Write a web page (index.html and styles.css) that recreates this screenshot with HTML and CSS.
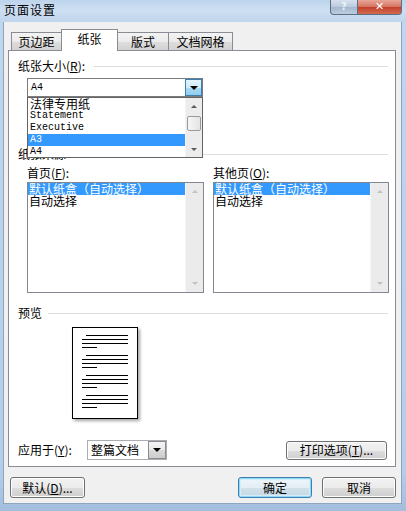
FILE: index.html
```html
<!DOCTYPE html>
<html lang="zh-CN">
<head>
<meta charset="utf-8">
<title>页面设置</title>
<link rel="stylesheet" href="styles.css">
</head>
<body>
<div class="window">
  <div class="titlebar">
    <span class="title">页面设置</span>
    <div class="caption">
      <span class="cap-btn cap-help">?</span>
      <span class="cap-btn cap-close">✕</span>
    </div>
  </div>
  <div class="client">
    <div class="tabs">
      <div class="tab t1">页边距</div>
      <div class="tab t2 active">纸张</div>
      <div class="tab t3">版式</div>
      <div class="tab t4">文档网格</div>
    </div>
    <div class="panel">
      <div class="group-head head-size"><span>纸张大小(<u>R</u>):</span><i class="rule"></i></div>
      <div class="combo size-combo">
        <span class="combo-text mono">A4</span>
        <span class="drop-btn hot"><i class="arrow-down"></i></span>
        <div class="droplist">
          <ul class="drop-items">
            <li>法律专用纸</li>
            <li class="mono">Statement</li>
            <li class="mono">Executive</li>
            <li class="mono sel">A3</li>
            <li class="mono">A4</li>
          </ul>
          <div class="vscroll">
            <span class="sbtn"><i class="tri-up dark"></i></span>
            <i class="thumb"></i>
            <span class="sbtn sbtn-bottom"><i class="tri-down dark"></i></span>
          </div>
        </div>
      </div>
      <div class="group-head head-source"><span>纸张来源</span><i class="rule"></i></div>
      <div class="sources">
        <div class="col col1">
          <span class="col-label">首页(<u>F</u>):</span>
          <div class="listbox">
            <ul class="list-items">
              <li class="sel">默认纸盒（自动选择）</li>
              <li>自动选择</li>
            </ul>
            <div class="lb-scroll">
              <span class="sbtn"><i class="tri-up"></i></span>
              <span class="sbtn sbtn-bottom"><i class="tri-down"></i></span>
            </div>
          </div>
        </div>
        <div class="col col2">
          <span class="col-label">其他页(<u>O</u>):</span>
          <div class="listbox">
            <ul class="list-items">
              <li class="sel">默认纸盒（自动选择）</li>
              <li>自动选择</li>
            </ul>
            <div class="lb-scroll">
              <span class="sbtn"><i class="tri-up"></i></span>
              <span class="sbtn sbtn-bottom"><i class="tri-down"></i></span>
            </div>
          </div>
        </div>
      </div>
      <div class="group-head head-preview"><span>预览</span><i class="rule rule-preview"></i></div>
      <div class="page">
        <svg width="64" height="90" viewBox="0 0 64 90" xmlns="http://www.w3.org/2000/svg">
          <g stroke="#000" stroke-width="1" shape-rendering="crispEdges">
            <line x1="13" y1="7.5" x2="55" y2="7.5"/>
            <line x1="9" y1="11.5" x2="55" y2="11.5"/>
            <line x1="9" y1="15.5" x2="55" y2="15.5"/>
            <line x1="9" y1="19.5" x2="24" y2="19.5"/>
            <line x1="13" y1="27.5" x2="55" y2="27.5"/>
            <line x1="9" y1="31.5" x2="55" y2="31.5"/>
            <line x1="9" y1="35.5" x2="55" y2="35.5"/>
            <line x1="9" y1="39.5" x2="24" y2="39.5"/>
            <line x1="13" y1="47.5" x2="55" y2="47.5"/>
            <line x1="9" y1="51.5" x2="55" y2="51.5"/>
            <line x1="9" y1="55.5" x2="55" y2="55.5"/>
            <line x1="9" y1="59.5" x2="24" y2="59.5"/>
            <line x1="13" y1="67.5" x2="55" y2="67.5"/>
            <line x1="9" y1="71.5" x2="55" y2="71.5"/>
            <line x1="9" y1="75.5" x2="55" y2="75.5"/>
            <line x1="9" y1="79.5" x2="24" y2="79.5"/>
          </g>
        </svg>
      </div>
      <div class="apply-row">
        <span class="apply-label">应用于(<u>Y</u>):</span>
        <div class="combo apply-combo">
          <span class="combo-text">整篇文档</span>
          <span class="drop-btn plain"><i class="arrow-down"></i></span>
        </div>
        <button class="btn btn-print">打印选项(<u>T</u>)...</button>
      </div>
    </div>
    <div class="footer">
      <button class="btn btn-def">默认(<u>D</u>)...</button>
      <button class="btn btn-ok">确定</button>
      <button class="btn btn-cancel">取消</button>
    </div>
  </div>
</div>
</body>
</html>
```
FILE: styles.css
```css
* { box-sizing: border-box; margin: 0; padding: 0; }
html, body { width: 406px; height: 511px; overflow: hidden; }
body {
  font-family: "Noto Sans CJK SC", "Noto Sans", sans-serif;
  font-size: 12px;
  line-height: 14px;
  color: #000;
  background: #b7cfe9;
}
ul { list-style: none; }
i { display: block; font-style: normal; }
u { text-decoration: underline; }

.window {
  width: 406px;
  height: 511px;
  display: flex;
  flex-direction: column;
  background: linear-gradient(180deg, #bcd4ec 0, #cddff2 10px, #c0d6ed 22px, #b6cde8 470px, #a3bedd 511px);
}

/* title bar */
.titlebar { height: 22px; flex: none; display: flex; align-items: flex-start; }
.title { padding: 3px 0 0 4px; font-size: 12px; line-height: 14px; letter-spacing: 1px; }
.caption { margin-left: auto; margin-right: 4px; display: flex; }
.cap-btn {
  height: 15px;
  display: flex;
  align-items: center;
  justify-content: center;
  color: #fff;
  font-family: "DejaVu Sans", sans-serif;
  font-size: 10px;
  font-weight: bold;
  border: 1px solid #5d6e83;
  border-top: none;
}
.cap-help {
  width: 28px;
  border-radius: 0 0 0 4px;
  background: linear-gradient(#d6e1ee, #bac9dc 50%, #a5b7ce 51%, #bccde1);
  color: #eef3f8;
}
.cap-close {
  width: 44px;
  border-left: none;
  border-radius: 0 0 4px 0;
  background: linear-gradient(#e9a598, #d4735f 50%, #c2402b 51%, #d46b50);
  font-size: 11px;
}

/* client area */
.client {
  flex: none;
  height: 482px;
  margin: 0 4px 0 3px;
  background: #f0f0f0;
  border: 1px solid #8ea5c2;
  border-top: none;
  padding: 7px 5px 0 4px;
  display: flex;
  flex-direction: column;
}

/* tabs */
.tabs {
  height: 22px;
  flex: none;
  display: flex;
  align-items: flex-end;
  padding-left: 3px;
  margin-bottom: -1px;
  position: relative;
  z-index: 1;
}
.tab {
  height: 18px;
  margin-bottom: 1px;
  border: 1px solid #898c95;
  border-bottom: none;
  background: linear-gradient(#f3f3f3, #ebebeb 50%, #dedede 51%, #d2d2d2);
  text-align: center;
  padding-top: 1px;
  line-height: 16px;
}
.tab + .tab { margin-left: -1px; }
.t1 { width: 51px; }
.t2 { width: 57px; }
.t3 { width: 52px; }
.t4 { width: 65px; }
.tab.active {
  height: 22px;
  margin-bottom: 0;
  padding-top: 0;
  line-height: 18px;
  background: #fff;
  position: relative;
  z-index: 1;
}

/* panel */
.panel {
  height: 417px;
  flex: none;
  background: #fff;
  border: 1px solid #898c95;
  display: flex;
  flex-direction: column;
}
.group-head {
  flex: none;
  height: 14px;
  display: flex;
  align-items: center;
  padding: 0 7px 0 9px;
}
.rule { flex: 1; height: 1px; background: #dadfe3; margin-left: 8px; }
.rule-preview { margin-left: 6px; }
.head-size { margin-top: 8px; }
.head-source { margin-top: 50px; }
.head-preview { margin-top: 13px; }

/* combos */
.combo {
  flex: none;
  display: flex;
  align-items: center;
  border: 1px solid #abadb3;
  background: #fff;
  position: relative;
}
.combo-text { padding-left: 3px; }
.mono { font-family: "Liberation Mono", "DejaVu Sans Mono", monospace; font-size: 10px; }
.size-combo { margin: 5px 0 0 18px; width: 176px; height: 19px; z-index: 2; border-color: #7a7c80; }
.drop-btn {
  margin-left: auto;
  width: 17px;
  height: 17px;
  display: flex;
  align-items: center;
  justify-content: center;
}
.drop-btn.hot {
  border: 1px solid #3c7fb1;
  background: linear-gradient(#e4f3fc, #cfeafb 50%, #a9d9f4 51%, #93cdee);
}
.drop-btn.plain {
  width: 18px;
  height: 18px;
  border: 1px solid #8a8c90;
  background: linear-gradient(#f4f4f4, #e9e9e9 50%, #dadada 51%, #cdcdcd);
}
.arrow-down {
  width: 0;
  height: 0;
  border-left: 4px solid transparent;
  border-right: 4px solid transparent;
  border-top: 4px solid #000;
}

/* dropdown list */
.droplist {
  position: absolute;
  left: -1px;
  top: 18px;
  width: 176px;
  height: 61px;
  border: 1px solid #646464;
  background: #fff;
  display: flex;
}
.drop-items { flex: 1; }
.drop-items li { height: 12px; line-height: 12px; padding-left: 2px; font-size: 12px; white-space: nowrap; }
.drop-items li.mono { font-size: 10px; }
.drop-items li.sel { background: #3399ff; color: #fff; }
.vscroll {
  width: 17px;
  background: #ececec;
  border-left: 1px solid #f4f4f4;
  display: flex;
  flex-direction: column;
}
.sbtn { height: 16px; flex: none; display: flex; align-items: center; justify-content: center; }
.sbtn-bottom { margin-top: auto; }
.thumb {
  margin: 2px 1px 0 1px;
  height: 15px;
  border: 1px solid #9a9a9a;
  border-radius: 2px;
  background: linear-gradient(90deg, #f6f6f6, #e4e4e4);
}
.tri-up, .tri-down {
  width: 0;
  height: 0;
  border-left: 3px solid transparent;
  border-right: 3px solid transparent;
}
.tri-up { border-bottom: 3px solid #c2c2c2; }
.tri-down { border-top: 3px solid #c2c2c2; }
.tri-up.dark { border-bottom-color: #5a5a5a; }
.tri-down.dark { border-top-color: #5a5a5a; }

/* paper source */
.sources { flex: none; display: flex; gap: 9px; padding-left: 18px; margin-top: 5px; }
.col { display: flex; flex-direction: column; }
.col1 { width: 177px; }
.col2 { width: 176px; }
.col-label { height: 14px; line-height: 14px; }
.listbox {
  margin-top: 2px;
  height: 111px;
  border: 1px solid #828790;
  background: #fff;
  display: flex;
}
.list-items { flex: 1; }
.list-items li { height: 12px; line-height: 12px; padding-left: 1px; white-space: nowrap; }
.list-items li.sel { background: #3399ff; color: #fff; }
.lb-scroll {
  width: 18px;
  background: #ebebeb;
  border-left: 1px solid #f6f6f6;
  display: flex;
  flex-direction: column;
}
.lb-scroll .sbtn { height: 17px; }

/* preview */
.page {
  flex: none;
  margin: 7px 0 0 63px;
  width: 66px;
  height: 92px;
  border: 1px solid #000;
  background: #fff;
  box-shadow: 2px 2px 3px rgba(0, 0, 0, 0.35);
}
.page svg { display: block; }

/* apply row */
.apply-row {
  flex: none;
  margin-top: 21px;
  height: 20px;
  display: flex;
  align-items: center;
  padding: 0 8px 0 9px;
}
.apply-label { width: 69px; }
.apply-combo { width: 80px; height: 20px; }

/* buttons */
.btn {
  font: inherit;
  color: #000;
  height: 21px;
  border: 1px solid #707070;
  border-radius: 3px;
  background: linear-gradient(#f2f2f2, #ebebeb 50%, #dddddd 51%, #cfcfcf);
  box-shadow: inset 0 0 0 1px #fcfcfc;
  display: flex;
  align-items: center;
  justify-content: center;
  white-space: nowrap;
}
.btn-print { margin-left: auto; width: 101px; height: 19px; }
.footer { flex: none; display: flex; margin-top: 10px; padding-left: 2px; gap: 10px; }
.btn-def { width: 75px; }
.btn-ok {
  width: 74px;
  margin-left: auto;
  border-color: #3c7fb1;
  box-shadow: inset 0 0 0 1px #8fd8f6, inset 0 0 0 2px #d3eefa;
  background: linear-gradient(#eef6fa, #e3eef5 50%, #d2e1ea 51%, #c6d8e3);
}
.btn-cancel { width: 74px; }
```
